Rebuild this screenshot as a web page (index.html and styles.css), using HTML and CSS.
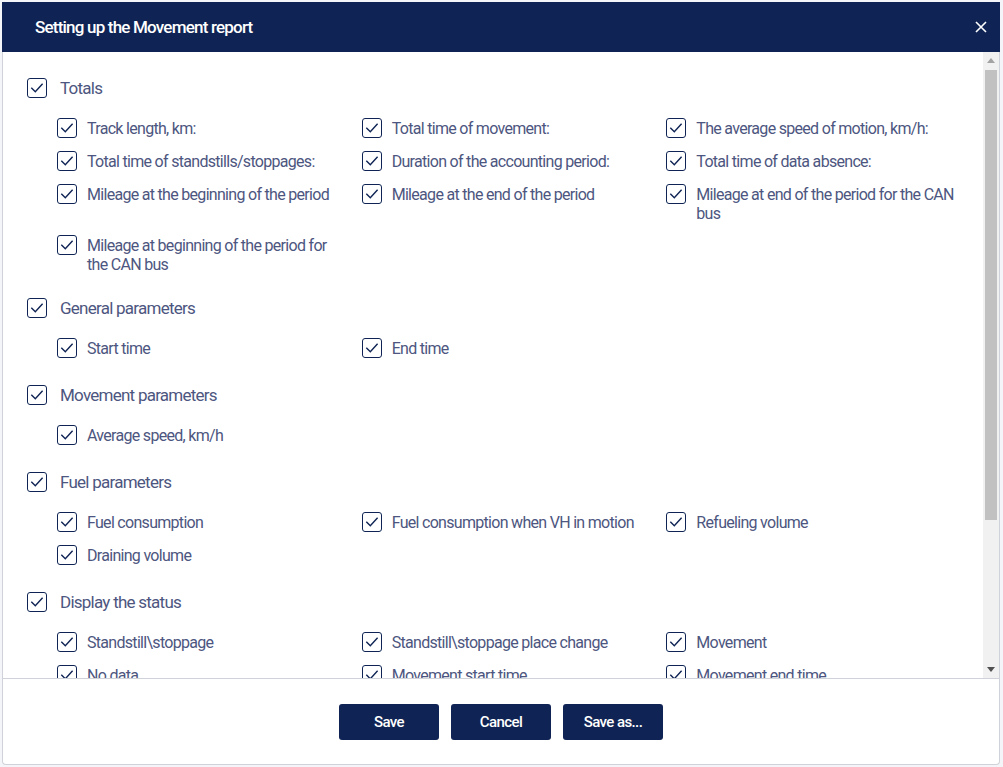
FILE: index.html
```html
<!DOCTYPE html>
<html lang="en">
<head>
    <meta charset="UTF-8">
    <meta name="viewport" content="width=device-width, initial-scale=1.0">
    <link rel="stylesheet" href="styles.css">
    <title>Setting up the Movement report</title>
</head>
<body>
    <div class="dialog">
        <div class="dialog-head">
            <span class="dialog-title">Setting up the Movement report</span>
            <button class="close" aria-label="Close">
                <svg width="12" height="12" viewBox="0 0 12 12"><path d="M1 1L11 11M11 1L1 11" stroke="#fff" stroke-width="1.6"/></svg>
            </button>
        </div>

        <div class="dialog-main">
            <div class="dialog-body">
                <div class="group">
                    <label class="check check-head"><span class="box"></span>Totals</label>
                    <div class="items">
                        <label class="check"><span class="box"></span>Track length, km:</label>
                        <label class="check"><span class="box"></span>Total time of movement:</label>
                        <label class="check"><span class="box"></span>The average speed of motion, km/h:</label>
                        <label class="check"><span class="box"></span>Total time of standstills/stoppages:</label>
                        <label class="check"><span class="box"></span>Duration of the accounting period:</label>
                        <label class="check"><span class="box"></span>Total time of data absence:</label>
                        <label class="check"><span class="box"></span>Mileage at the beginning of the period</label>
                        <label class="check"><span class="box"></span>Mileage at the end of the period</label>
                        <label class="check"><span class="box"></span>Mileage at end of the period for the CAN bus</label>
                        <label class="check"><span class="box"></span>Mileage at beginning of the period for the CAN bus</label>
                    </div>
                </div>

                <div class="group">
                    <label class="check check-head"><span class="box"></span>General parameters</label>
                    <div class="items">
                        <label class="check"><span class="box"></span>Start time</label>
                        <label class="check"><span class="box"></span>End time</label>
                    </div>
                </div>

                <div class="group">
                    <label class="check check-head"><span class="box"></span>Movement parameters</label>
                    <div class="items">
                        <label class="check"><span class="box"></span>Average speed, km/h</label>
                    </div>
                </div>

                <div class="group">
                    <label class="check check-head"><span class="box"></span>Fuel parameters</label>
                    <div class="items">
                        <label class="check"><span class="box"></span>Fuel consumption</label>
                        <label class="check"><span class="box"></span>Fuel consumption when VH in motion</label>
                        <label class="check"><span class="box"></span>Refueling volume</label>
                        <label class="check"><span class="box"></span>Draining volume</label>
                    </div>
                </div>

                <div class="group">
                    <label class="check check-head"><span class="box"></span>Display the status</label>
                    <div class="items">
                        <label class="check"><span class="box"></span>Standstill\stoppage</label>
                        <label class="check"><span class="box"></span>Standstill\stoppage place change</label>
                        <label class="check"><span class="box"></span>Movement</label>
                        <label class="check"><span class="box"></span>No data</label>
                        <label class="check"><span class="box"></span>Movement start time</label>
                        <label class="check"><span class="box"></span>Movement end time</label>
                    </div>
                </div>
            </div>

            <div class="scrollbar">
                <span class="sb-arrow sb-up"></span>
                <span class="sb-thumb"></span>
                <span class="sb-arrow sb-down"></span>
            </div>
        </div>

        <div class="dialog-foot">
            <button class="btn">Save</button>
            <button class="btn">Cancel</button>
            <button class="btn">Save as...</button>
        </div>
    </div>
</body>
</html>
```

FILE: styles.css
```css
body {
    margin: 0;
    padding: 2px 3px 2px 2px;
    background: #f4f5f8;
    font-family: Roboto, "Liberation Sans", sans-serif;
}
.dialog {
    height: 763px;
    display: flex;
    flex-direction: column;
    background: #fff;
    border: 1px solid #cfd2d8;
    border-top: none;
    border-radius: 0 0 4px 4px;
    box-sizing: border-box;
}
.dialog-head {
    height: 50px;
    flex: none;
    display: flex;
    align-items: center;
    justify-content: space-between;
    padding: 0 9px 0 33px;
    margin: 0 -1px;
    background: #0f2454;
}
.dialog-title {
    color: #fff;
    font-size: 17px;
    font-weight: 500;
    letter-spacing: -0.8px;
}
.close {
    border: none;
    background: transparent;
    padding: 4px;
    display: flex;
    cursor: pointer;
}
.dialog-main {
    flex: 1;
    min-height: 0;
    display: flex;
}
.dialog-body {
    flex: 1;
    overflow: hidden;
    padding: 26px 12px 0 24px;
}
.scrollbar {
    flex: none;
    width: 16px;
    display: flex;
    flex-direction: column;
    background: #f1f1f1;
}
.sb-arrow {
    height: 17px;
    background-repeat: no-repeat;
    background-position: center;
    background-size: 8px 5px;
}
.sb-up {
    background-image: url("data:image/svg+xml,%3Csvg xmlns='http://www.w3.org/2000/svg' viewBox='0 0 8 5'%3E%3Cpath d='M0 5L4 0L8 5Z' fill='%23a3a3a3'/%3E%3C/svg%3E");
}
.sb-down {
    margin-top: auto;
    background-image: url("data:image/svg+xml,%3Csvg xmlns='http://www.w3.org/2000/svg' viewBox='0 0 8 5'%3E%3Cpath d='M0 0L4 5L8 0Z' fill='%23505050'/%3E%3C/svg%3E");
}
.sb-thumb {
    height: 450px;
    margin: 1px 2px 0;
    background: #c1c1c1;
}
.group {
    margin-bottom: 26px;
}
.group:first-child {
    margin-bottom: 24px;
}
.check {
    display: flex;
    align-items: flex-start;
    gap: 10px;
    color: #4d5680;
    font-size: 16px;
    line-height: 19px;
    letter-spacing: -0.7px;
}
.check-head {
    font-size: 17px;
    line-height: 20px;
    gap: 13px;
    letter-spacing: -0.75px;
}
.box {
    flex: none;
    width: 20px;
    height: 20px;
    box-sizing: border-box;
    border: 1.5px solid #0f2454;
    border-radius: 3px;
    background: #fff url("data:image/svg+xml,%3Csvg xmlns='http://www.w3.org/2000/svg' viewBox='0 0 20 20'%3E%3Cpath d='M4.3 9.8L8.3 13.8L15.6 5.8' fill='none' stroke='%230f2454' stroke-width='1.4'/%3E%3C/svg%3E") center / 20px 20px no-repeat;
}
.items {
    display: grid;
    grid-template-columns: repeat(3, 1fr);
    row-gap: 12px;
    margin: 20px 0 0 30px;
}
.items .check {
    min-height: 21px;
    padding: 1px 14px 0 0;
    box-sizing: border-box;
}
.items .box {
    margin-top: -1px;
}
.dialog-foot {
    flex: none;
    display: flex;
    justify-content: center;
    gap: 12px;
    padding: 25px 0 24px;
    border-top: 1px solid #cfd2d8;
}
.btn {
    width: 100px;
    height: 36px;
    border: none;
    border-radius: 3px;
    background: #0f2454;
    color: #fff;
    font-family: Roboto, "Liberation Sans", sans-serif;
    font-size: 15px;
    font-weight: 500;
    letter-spacing: -0.6px;
    cursor: pointer;
}
```
